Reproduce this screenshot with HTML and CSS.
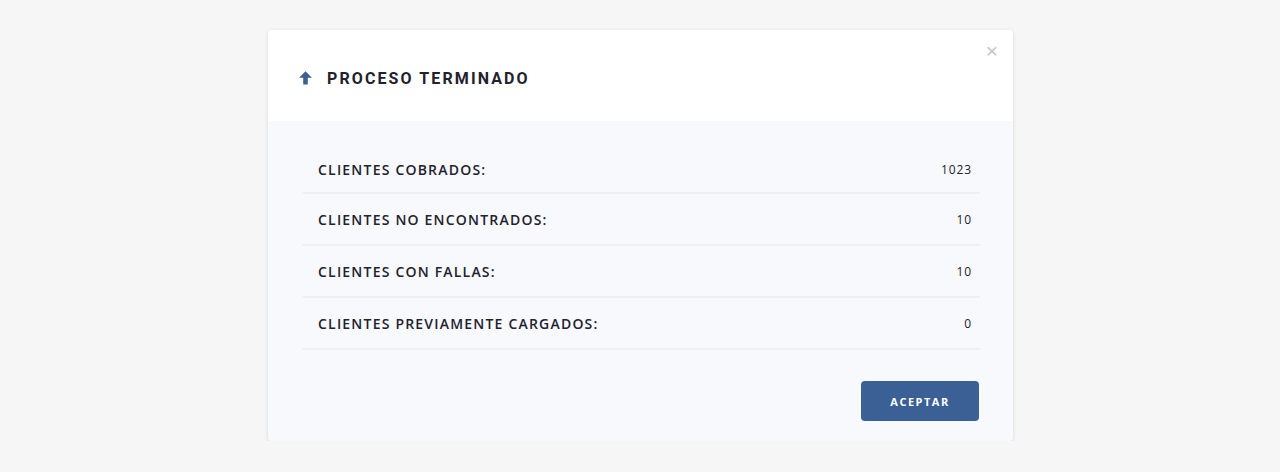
FILE: index.html
```html
<!DOCTYPE html>
<html lang="es">
<head>
    <meta charset="UTF-8">
    <title>Proceso terminado</title>
    <link rel="stylesheet" href="styles.css">
</head>
<body>
    <div class="modal">
        <div class="modal-header">
            <svg class="icon-up" width="13" height="14" viewBox="0 0 13 14">
                <path d="M6.5 0.3 L12.9 6.8 L8.8 6.8 L8.8 13.4 L4.2 13.4 L4.2 6.8 L0.1 6.8 Z" fill="#3a6096"/>
            </svg>
            <h2 class="modal-title">PROCESO TERMINADO</h2>
            <span class="close">&times;</span>
        </div>
        <div class="modal-body">
            <ul class="summary">
                <li class="row"><span>CLIENTES COBRADOS:</span><span class="value">1023</span></li>
                <li class="row"><span>CLIENTES NO ENCONTRADOS:</span><span class="value">10</span></li>
                <li class="row"><span>CLIENTES CON FALLAS:</span><span class="value">10</span></li>
                <li class="row"><span>CLIENTES PREVIAMENTE CARGADOS:</span><span class="value">0</span></li>
            </ul>
            <div class="actions">
                <button type="button" class="btn">ACEPTAR</button>
            </div>
        </div>
    </div>
</body>
</html>
```

FILE: styles.css
```css
body {
    margin: 0;
    background-color: #f6f6f6;
    font-family: "Open Sans", Arial, sans-serif;
    color: #22212e;
}
.modal {
    width: 745px;
    margin: 30px 0 0 268px;
    background-color: #f8f9fd;
    border-radius: 4px;
    box-shadow: 0 1px 4px rgba(0, 0, 0, 0.12);
    overflow: hidden;
}
.modal-header {
    position: relative;
    display: flex;
    align-items: center;
    height: 85px;
    padding: 6px 0 0 31px;
    background-color: #fff;
}
.icon-up {
    margin-right: 15px;
    margin-top: -1px;
}
.modal-title {
    margin: 0;
    font-family: Roboto, Arial, sans-serif;
    font-size: 16px;
    font-weight: 700;
    letter-spacing: 2.1px;
    color: #22212e;
}
.close {
    position: absolute;
    top: 9px;
    right: 15px;
    font-family: Arial, sans-serif;
    font-size: 21px;
    color: #c4c4c4;
}
.modal-body {
    padding: 22px 33px 20px 34px;
}
.summary {
    list-style: none;
    margin: 0;
    padding: 0;
}
.row {
    display: flex;
    justify-content: space-between;
    align-items: center;
    box-sizing: border-box;
    height: 52px;
    padding: 1px 8px 0 16px;
    border-bottom: 2px solid #eff0f4;
    font-size: 14px;
    font-weight: 600;
    letter-spacing: 1.2px;
}
.row:first-child {
    height: 51px;
    padding-top: 3px;
}
.value {
    font-size: 12px;
    font-weight: 500;
    letter-spacing: 0.9px;
}
.actions {
    display: flex;
    justify-content: flex-end;
    margin-top: 31px;
    padding-right: 1px;
}
.btn {
    width: 118px;
    height: 40px;
    border: none;
    border-radius: 4px;
    background-color: #3a6096;
    color: #fff;
    font-family: "Open Sans", Arial, sans-serif;
    font-size: 11px;
    font-weight: 700;
    letter-spacing: 1.5px;
}
```
